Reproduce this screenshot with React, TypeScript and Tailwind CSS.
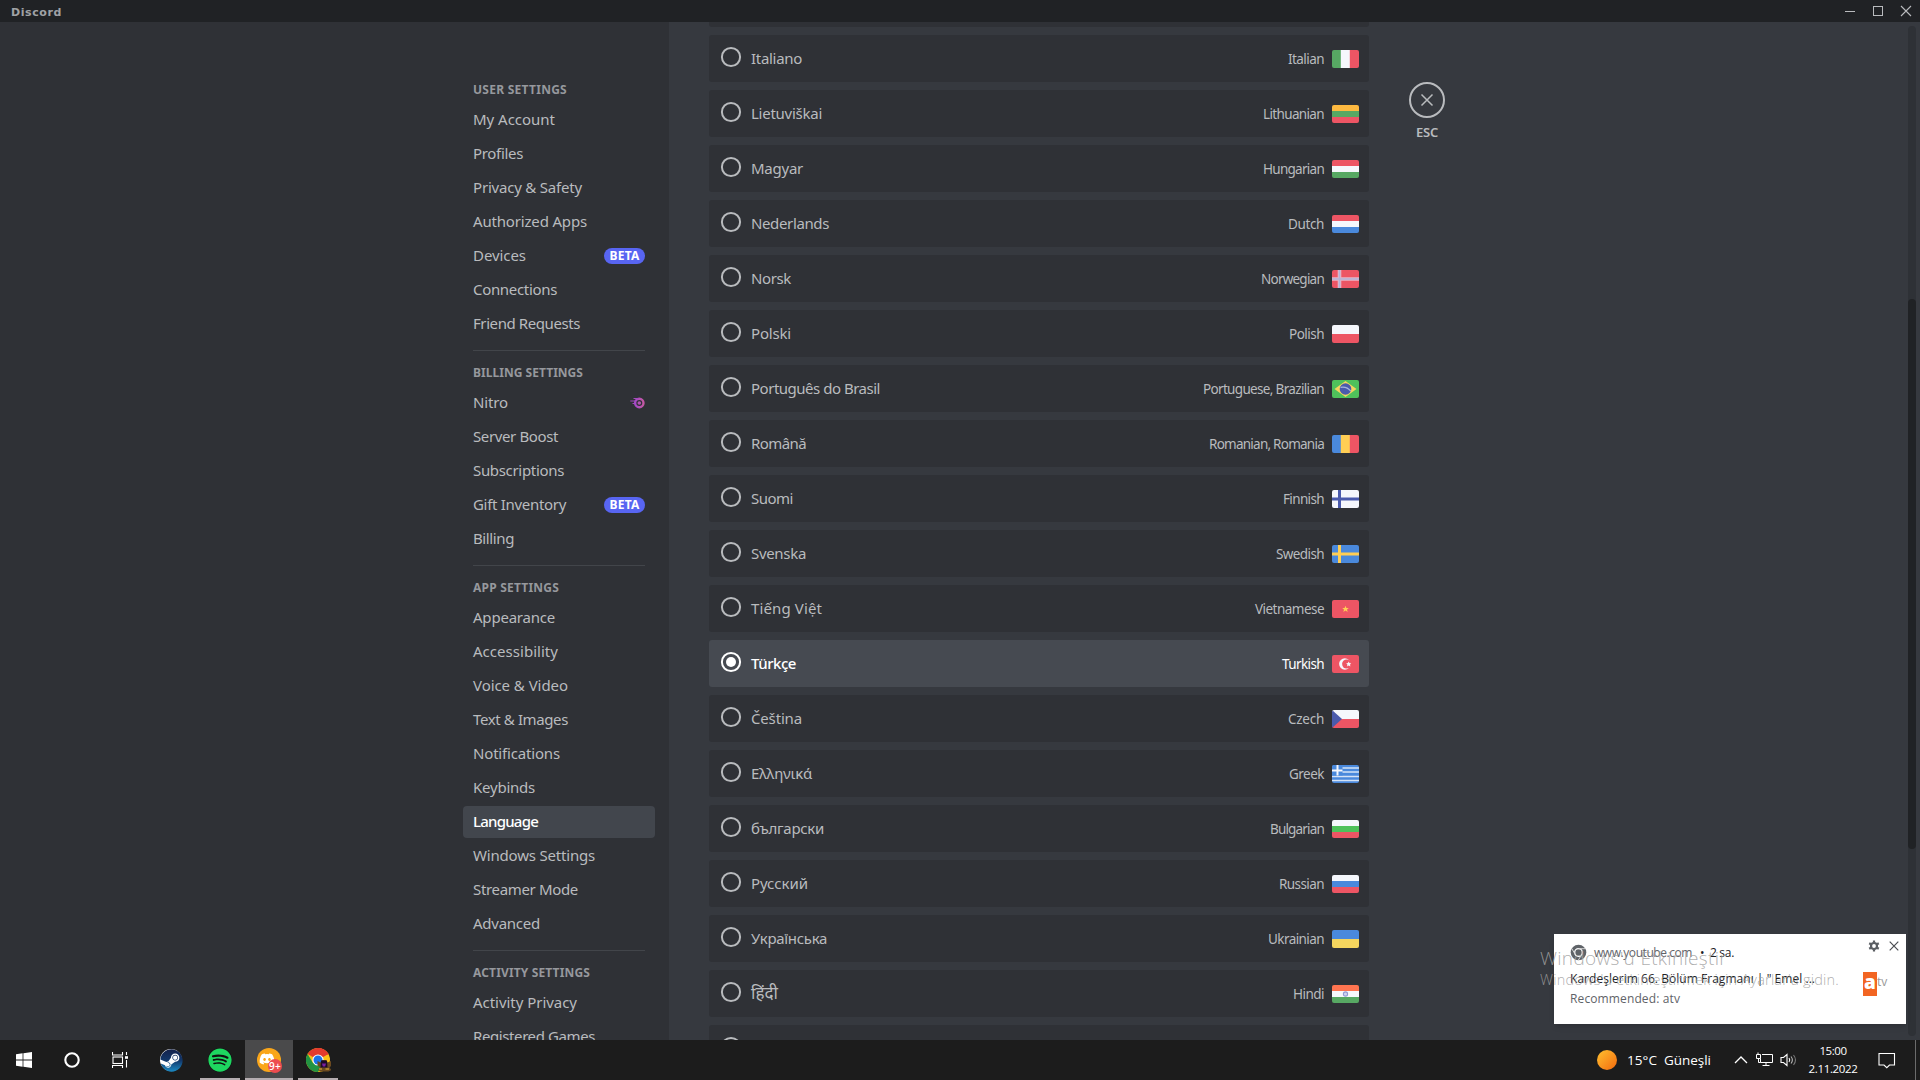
import { useLayoutEffect, useRef, type ReactNode } from 'react';
import { FaDiscord, FaSpotify, FaSteam } from 'react-icons/fa';

/** Text whose tracking is adjusted so that the run spans `w` pixels. */
function Fit({ w, className = '', children }: { w: number; className?: string; children: string }) {
  const ref = useRef<HTMLSpanElement>(null);
  useLayoutEffect(() => {
    const el = ref.current;
    if (!el) return;
    el.style.letterSpacing = '0px';
    const natural = el.getBoundingClientRect().width;
    el.style.letterSpacing = `${(w - natural) / children.length}px`;
  }, [w, children]);
  return (
    <span ref={ref} className={`inline-block whitespace-nowrap ${className}`}>
      {children}
    </span>
  );
}

type Item = { label: string; w: number; badge?: 'beta' | 'nitro'; active?: boolean };
type Section = { title: string; w: number; items: Item[] };

const sections: Section[] = [
  {
    title: 'USER SETTINGS',
    w: 94,
    items: [
      { label: 'My Account', w: 82 },
      { label: 'Profiles', w: 50 },
      { label: 'Privacy & Safety', w: 109 },
      { label: 'Authorized Apps', w: 114 },
      { label: 'Devices', w: 53, badge: 'beta' },
      { label: 'Connections', w: 84 },
      { label: 'Friend Requests', w: 107 },
    ],
  },
  {
    title: 'BILLING SETTINGS',
    w: 110,
    items: [
      { label: 'Nitro', w: 35, badge: 'nitro' },
      { label: 'Server Boost', w: 85 },
      { label: 'Subscriptions', w: 91 },
      { label: 'Gift Inventory', w: 93, badge: 'beta' },
      { label: 'Billing', w: 41 },
    ],
  },
  {
    title: 'APP SETTINGS',
    w: 86,
    items: [
      { label: 'Appearance', w: 82 },
      { label: 'Accessibility', w: 85 },
      { label: 'Voice & Video', w: 95 },
      { label: 'Text & Images', w: 95 },
      { label: 'Notifications', w: 87 },
      { label: 'Keybinds', w: 62 },
      { label: 'Language', w: 65, active: true },
      { label: 'Windows Settings', w: 122 },
      { label: 'Streamer Mode', w: 105 },
      { label: 'Advanced', w: 67 },
    ],
  },
  {
    title: 'ACTIVITY SETTINGS',
    w: 117,
    items: [
      { label: 'Activity Privacy', w: 104 },
      { label: 'Registered Games', w: 122 },
    ],
  },
];

const RED = '#ed5564';
const WHITE = '#f5f7fc';
const BLUE = '#4a89dc';
const NAVY = '#4a5aac';
const YELLOW = '#ffce54';
const GREEN = '#57a863';
const LIME = '#4fc15b';

const bars = (a: string, b: string, c: string) => (
  <>
    <rect width="27" height="6.2" fill={a} />
    <rect y="6" width="27" height="6" fill={b} />
    <rect y="12" width="27" height="6" fill={c} />
  </>
);
const pillars = (a: string, b: string, c: string) => (
  <>
    <rect width="9" height="18" fill={a} />
    <rect x="8.8" width="9.2" height="18" fill={b} />
    <rect x="17.8" width="9.2" height="18" fill={c} />
  </>
);
const halves = (a: string, b: string) => (
  <>
    <rect width="27" height="9" fill={a} />
    <rect y="9" width="27" height="9" fill={b} />
  </>
);
const cross = (bg: string, outer: string, t: number) => (
  <>
    <rect width="27" height="18" fill={bg} />
    <path d="M7.5 0v18M0 9h27" stroke={outer} strokeWidth={t} />
  </>
);

const flags: Record<string, ReactNode> = {
  it: pillars(GREEN, WHITE, RED),
  lt: bars('#fdb940', GREEN, RED),
  hu: bars(RED, WHITE, GREEN),
  nl: bars(RED, WHITE, BLUE),
  no: (
    <>
      {cross(RED, '#e9b5c6', 3.6)}
      <path d="M7.5 0v18M0 9h27" stroke="#b3b3d8" strokeWidth="1.6" />
    </>
  ),
  pl: halves(WHITE, RED),
  br: (
    <>
      <rect width="27" height="18" fill={LIME} />
      <path d="M2.5 9 13.5 1l11 8-11 8z" fill="#f5d55e" />
      <circle cx="13.5" cy="9" r="5.8" fill={NAVY} />
      <path d="M8.500 7.400c4-.8 7.800.6 10.300 3.800" fill="none" stroke="#a9b5dd" strokeWidth="1.200" />
    </>
  ),
  ro: pillars(BLUE, YELLOW, RED),
  fi: cross(WHITE, NAVY, 3),
  se: cross(BLUE, YELLOW, 3),
  vn: (
    <>
      <rect width="27" height="18" fill={RED} />
      <path d="m13.500 5.700.9 2.200 2.400.1-1.800 1.500.6 2.400-2.100-1.300-2.100 1.300.6-2.400-1.800-1.500 2.400-.1z" fill={YELLOW} />
    </>
  ),
  tr: (
    <>
      <rect width="27" height="18" fill={RED} />
      <circle cx="12.800" cy="9" r="5.700" fill={WHITE} />
      <circle cx="14.600" cy="9" r="4.500" fill={RED} />
      <path d="m16.700 6.500.8 1.600 1.800.3-1.300 1.200.3 1.800-1.600-.9-1.600.9.3-1.800-1.300-1.200 1.800-.3z" fill={WHITE} />
    </>
  ),
  cz: (
    <>
      {halves(WHITE, RED)}
      <path d="M0 0l10 9-10 9z" fill={NAVY} />
    </>
  ),
  gr: (
    <>
      <rect width="27" height="18" fill={BLUE} />
      <path d="M0 3h27M0 7h27M0 11.500h27M0 15.500h27" stroke="#d5e3f6" strokeWidth="1.500" />
      <rect width="10.500" height="10.500" fill={BLUE} />
      <path d="M5.500 0v10.500M0 5.500h10.500" stroke={WHITE} strokeWidth="2" />
    </>
  ),
  bg: bars(WHITE, LIME, RED),
  ru: bars(WHITE, BLUE, RED),
  ua: halves(BLUE, '#f5d55e'),
  in: (
    <>
      {bars('#ff7450', WHITE, GREEN)}
      <circle cx="13.500" cy="9" r="2.100" fill="#cfd4f0" stroke="#9099d6" strokeWidth="1.100" />
    </>
  ),
};

type Lang = { name: string; w: number; en: string; ew: number; flag: string; on?: boolean };
const langs: Lang[] = [
  { name: 'Italiano', w: 51, en: 'Italian', ew: 36, flag: 'it' },
  { name: 'Lietuviškai', w: 71, en: 'Lithuanian', ew: 61, flag: 'lt' },
  { name: 'Magyar', w: 52, en: 'Hungarian', ew: 61, flag: 'hu' },
  { name: 'Nederlands', w: 78, en: 'Dutch', ew: 36, flag: 'nl' },
  { name: 'Norsk', w: 40, en: 'Norwegian', ew: 63, flag: 'no' },
  { name: 'Polski', w: 40, en: 'Polish', ew: 35, flag: 'pl' },
  { name: 'Português do Brasil', w: 129, en: 'Portuguese, Brazilian', ew: 121, flag: 'br' },
  { name: 'Română', w: 55, en: 'Romanian, Romania', ew: 115, flag: 'ro' },
  { name: 'Suomi', w: 42, en: 'Finnish', ew: 41, flag: 'fi' },
  { name: 'Svenska', w: 55, en: 'Swedish', ew: 48, flag: 'se' },
  { name: 'Tiếng Việt', w: 71, en: 'Vietnamese', ew: 69, flag: 'vn' },
  { name: 'Türkçe', w: 45, en: 'Turkish', ew: 42, flag: 'tr', on: true },
  { name: 'Čeština', w: 51, en: 'Czech', ew: 36, flag: 'cz' },
  { name: 'Ελληνικά', w: 61, en: 'Greek', ew: 35, flag: 'gr' },
  { name: 'български', w: 73, en: 'Bulgarian', ew: 54, flag: 'bg' },
  { name: 'Русский', w: 57, en: 'Russian', ew: 45, flag: 'ru' },
  { name: 'Українська', w: 76, en: 'Ukrainian', ew: 56, flag: 'ua' },
  { name: 'हिंदी', w: 0, en: 'Hindi', ew: 31, flag: 'in' },
];

function Flag({ id }: { id: string }) {
  return (
    <svg width="27" height="18" viewBox="0 0 27 18" className="ml-2 rounded-[2px]">
      {flags[id]}
    </svg>
  );
}

function Radio({ on }: { on?: boolean }) {
  return (
    <svg width="24" height="24" viewBox="0 0 24 24" className={on ? 'text-white' : 'text-[#b9bbbe]'}>
      <circle cx="12" cy="12" r="9.1" fill="none" stroke="currentColor" strokeWidth="2" />
      {on && <circle cx="12" cy="12" r="5" fill="currentColor" />}
    </svg>
  );
}

function LanguageRow({ lang }: { lang: Lang }) {
  return (
    <div
      className={`flex h-[47px] shrink-0 items-start rounded-[3px] px-2.5 pt-2.5 ${
        lang.on ? 'bg-[#464a51] text-white' : 'bg-[#2f3136] text-[#b9bbbe]'
      }`}
    >
      <Radio on={lang.on} />
      <div className="ml-2 pt-[3px] text-[15px] leading-5">
        {lang.w ? (
          <Fit w={lang.w} className={lang.on ? 'font-medium' : ''}>
            {lang.name}
          </Fit>
        ) : (
          <span className="font-['Noto_Sans','Noto_Sans_Devanagari',sans-serif] text-[17px]">{lang.name}</span>
        )}
      </div>
      <div className="ml-auto flex items-center pt-[5px] text-[13.5px] leading-[18px]">
        <Fit w={lang.ew}>{lang.en}</Fit>
        <Flag id={lang.flag} />
      </div>
    </div>
  );
}

function NitroIcon() {
  return (
    <svg width="15" height="12" viewBox="0 0 15 12" fill="none">
      <defs>
        <linearGradient id="nitro" x1="0" x2="1">
          <stop offset="0" stopColor="#a548c9" />
          <stop offset="1" stopColor="#c459a3" />
        </linearGradient>
      </defs>
      <circle cx="9.300" cy="6" r="4.200" stroke="url(#nitro)" strokeWidth="2.400" />
      <circle cx="9.300" cy="6" r="1.800" fill="#b252b3" />
      <path d="M3.500 1.500h5M.3 4h5.200M2.500 6.500h2.500" stroke="#a64ac0" strokeWidth="1.200" />
    </svg>
  );
}

function Sidebar() {
  return (
    <aside className="flex w-[669px] shrink-0 justify-end bg-[#2f3136] pt-[54px] pr-3.5">
      <nav className="w-48">
        {sections.map((s, i) => (
          <div key={s.title} className="flex flex-col">
            {i > 0 && <div className="mx-2.5 my-2 h-px bg-[#42454a]" />}
            <div className="h-7 px-2.5 pt-1.5 text-xs leading-4 font-bold text-[#96989d]">
              <Fit w={s.w}>{s.title}</Fit>
            </div>
            {s.items.map((it) => (
              <div
                key={it.label}
                className={`mb-0.5 flex h-8 items-center rounded px-2.5 text-[15px] leading-5 ${
                  it.active ? 'bg-[#42464d] font-medium text-white' : 'text-[#b9bbbe]'
                }`}
              >
                <Fit w={it.w} className="-mt-[3px]">
                  {it.label}
                </Fit>
                {it.badge === 'beta' && (
                  <span className="ml-auto flex h-4 w-[41px] items-center justify-center rounded-full bg-[#5865f2] text-xs font-bold text-white">
                    <Fit w={30}>BETA</Fit>
                  </span>
                )}
                {it.badge === 'nitro' && (
                  <span className="ml-auto">
                    <NitroIcon />
                  </span>
                )}
              </div>
            ))}
          </div>
        ))}
      </nav>
    </aside>
  );
}

function TitleBar() {
  return (
    <header className="flex h-[22px] shrink-0 items-center bg-[#202225] pl-[11px] text-[#a0a2a6]">
      <Fit w={51} className="mt-1 font-['DejaVu_Sans',sans-serif] text-[11px] leading-3 font-bold">
        Discord
      </Fit>
      <svg width="84" height="22" viewBox="0 0 84 22" className="ml-auto text-[#b9bbbe]" fill="none" stroke="currentColor">
        <path d="M9 11.500h10" />
        <rect x="37.500" y="6.500" width="9" height="9" />
        <path d="M65 6l10 10M75 6 65 16" strokeWidth="1.100" />
      </svg>
    </header>
  );
}

function CloseButton() {
  return (
    <div className="ml-10 flex w-9 flex-col items-center pt-[60px]">
      <div className="flex size-9 items-center justify-center rounded-full border-2 border-[#b9bbbe]">
        <svg width="14" height="14" viewBox="0 0 14 14" stroke="#b9bbbe" strokeWidth="1.500">
          <path d="M1.500 1.500l11 11M12.500 1.500l-11 11" />
        </svg>
      </div>
      <span className="mt-[6px] text-[13px] leading-4 font-semibold text-[#b9bbbe]">
        <Fit w={22}>ESC</Fit>
      </span>
    </div>
  );
}

function Toast() {
  return (
    <div className="absolute top-[934px] left-[1554px] h-[90px] w-[352px] bg-white font-['Open_Sans',sans-serif] shadow-md">
      <div className="flex h-7 items-start pt-[10px] pl-4">
        <svg width="17" height="17" viewBox="0 0 17 17" fill="none">
          <circle cx="8.500" cy="8.500" r="7.800" fill="#5f6368" />
          <circle cx="8.500" cy="8.500" r="3.800" stroke="#fff" strokeWidth="1.300" />
          <path d="M8.500 4.700h7M5.200 10.400 1.800 4.600M11.800 10.400 8.300 16.200" stroke="#d5d5d5" strokeWidth="1" />
        </svg>
        <div className="ml-[7px] flex text-[12px] leading-[17px] text-[#5f6368]">
          <Fit w={98}>www.youtube.com</Fit>
          <span className="ml-2 w-[10px] text-[#202124]">•</span>
          <span className="text-[#202124]">
            <Fit w={24}>2 sa.</Fit>
          </span>
        </div>
        <div className="ml-auto flex items-center gap-[9px] pr-[6px]">
          <svg width="12" height="12" viewBox="0 0 12 12" className="-mt-1">
            <circle cx="6" cy="6" r="3" fill="none" stroke="#5a5e63" strokeWidth="2.200" />
            <path d="M6 .5v2M6 9.500v2M1.200 3.200l1.800 1M9 7.800l1.800 1M1.200 8.800l1.800-1M9 4.200l1.800-1" stroke="#5a5e63" strokeWidth="2.200" />
          </svg>
          <svg width="10" height="10" viewBox="0 0 10 10" className="-mt-1 mr-px" stroke="#4a4d51" strokeWidth="1.200">
            <path d="M.7.7l8.600 8.600M9.300.7.7 9.300" />
          </svg>
        </div>
      </div>
      <div className="flex pl-4">
        <div className="pt-[7px] text-[12px] leading-5 text-[#202124]">
          <div>
            <Fit w={245}>{'Kardeşlerim 66. Bölüm Fragmanı | " Emel ...'}</Fit>
          </div>
          <div className="text-[#5f6368]">
            <Fit w={110}>Recommended: atv</Fit>
          </div>
        </div>
        <div className="mt-[10px] ml-auto flex h-6 w-[43px] items-center">
          <span className="flex h-6 w-[14px] items-center justify-center bg-[#f26522] pb-1 text-[19px] leading-none font-extrabold text-white">
            a
          </span>
          <span className="pb-1 text-[12px] text-[#9a9a9a]">tv</span>
        </div>
      </div>
    </div>
  );
}

function Watermark() {
  return (
    <div className="absolute top-[944px] left-[1540px] font-['Open_Sans',sans-serif] font-light text-[#a0a0a0]/85">
      <div className="text-[19px] leading-7">
        <Fit w={187}>Windows'u Etkinleştir</Fit>
      </div>
      <div className="-mt-0.5 text-[14.5px] leading-5">
        <Fit w={299}>Windows'u etkinleştirmek için Ayarlar'a gidin.</Fit>
      </div>
    </div>
  );
}

function SteamIcon() {
  return (
    <div className="relative size-[22px] rounded-full bg-white">
      <svg width="0" height="0" className="absolute">
        <linearGradient id="steam" x1="0" y1="0" x2="0" y2="1">
          <stop offset="0" stopColor="#14214a" />
          <stop offset=".5" stopColor="#12386b" />
          <stop offset="1" stopColor="#1b8ac4" />
        </linearGradient>
      </svg>
      <FaSteam size={23} className="absolute -top-[.5px] -left-[.5px]" style={{ fill: 'url(#steam)' }} />
    </div>
  );
}

function ChromeIcon() {
  return (
    <svg width="25" height="25" viewBox="0 0 25 25">
      <circle cx="12" cy="12" r="12" fill="#fbc116" />
      <path d="M12 12 1.600 6A12 12 0 0 1 22.400 6z" fill="#e33b2e" />
      <path d="M12 0a12 12 0 0 1 10.400 6.500H12z" fill="#e33b2e" />
      <path d="M1.600 6A12 12 0 0 0 12 24l5.200-9L12 12 7 15z" fill="#229342" />
      <circle cx="12" cy="12" r="5.600" fill="#fff" />
      <circle cx="12" cy="12" r="4.500" fill="#1a73e8" />
      <path d="M11.500 13l3 1.500 1.500-2.500h4l1.500 2.500 3.500-1.500v5l-1.500 1.500 2 2.500-3 1.500h-8l-2.500-1.500 2-2.500-2.500-2z" fill="#6b4a20" />
      <path d="M15 12.500h6l.5 7h-7z" fill="#1d0b26" />
      <path d="M16 15.500h4l-.8 3h-2.400z" fill="#7b1fa2" />
      <path d="M13 21h3M19.500 21h3.500" stroke="#c4922c" strokeWidth="1.300" />
    </svg>
  );
}

function TaskButton({ open, active, className = 'w-12', children }: { open?: boolean; active?: boolean; className?: string; children: ReactNode }) {
  return (
    <div className={`relative flex h-10 shrink-0 items-center justify-center ${active ? 'bg-[#4a4a4b]' : ''} ${className}`}>
      {children}
      {(open || active) && (
        <div className={`absolute bottom-0 h-0.5 bg-[#b5adb0] ${active ? 'inset-x-0' : 'inset-x-1'}`} />
      )}
    </div>
  );
}

function Taskbar() {
  return (
    <footer className="flex h-10 shrink-0 bg-[#1c1c1c] font-['Open_Sans',sans-serif] text-white">
      <TaskButton>
        <svg width="16" height="16" viewBox="0 0 16 16" fill="#fff">
          <path d="M0 2.200 6.600 1.300V7.600H0zM7.400 1.200 16 0v7.600H7.400zM0 8.400h6.600v6.300L0 13.800zM7.400 8.400H16V16l-8.600-1.200z" />
        </svg>
      </TaskButton>
      <TaskButton>
        <svg width="16" height="16" viewBox="0 0 16 16" fill="none">
          <circle cx="8" cy="8" r="6.700" stroke="#fff" strokeWidth="2.100" />
        </svg>
      </TaskButton>
      <TaskButton>
        <svg width="16" height="16" viewBox="0 0 16 16" fill="none" stroke="#fff" strokeWidth="1.100">
          <path d="M.5 0v3h10V0M.5 16v-2.500h10V16M14.500 0v3M14.500 8v7.500" />
          <rect x="1" y="5" width="9.500" height="6.500" />
          <path d="M13 5.500h3" strokeWidth="2.600" />
        </svg>
      </TaskButton>
      <TaskButton className="w-[54px]">
        <SteamIcon />
      </TaskButton>
      <TaskButton open className="-ml-0.5 w-12">
        <div className="flex size-6 items-center justify-center rounded-full bg-[#111]">
          <FaSpotify size={24} className="shrink-0 text-[#1ed760]" />
        </div>
      </TaskButton>
      <TaskButton active className="ml-px w-12">
        <div className="relative flex size-6 items-center justify-center rounded-full bg-[#faa61a]">
          <FaDiscord size={16} className="-mt-0.5 -ml-1" />
          <span className="absolute top-[11px] left-[11px] flex size-[14px] items-center justify-center rounded-full bg-[#ed4c50]">
            <Fit w={12} className="text-[10px] leading-none font-semibold">
              9+
            </Fit>
          </span>
        </div>
      </TaskButton>
      <TaskButton open className="ml-px w-12">
        <ChromeIcon />
      </TaskButton>

      <div className="ml-auto flex items-center">
        <div className="size-5 rounded-full bg-linear-to-br from-[#fdc02f] to-[#f2680c]" />
        <div className="ml-2.5 flex w-[84px] justify-between text-[13.5px] leading-5">
          <Fit w={30}>15°C</Fit>
          <Fit w={47}>Güneşli</Fit>
        </div>
        <svg width="14" height="8" viewBox="0 0 14 8" className="ml-[23px]" fill="none" stroke="#fff" strokeWidth="1.300">
          <path d="M1 7l6-6 6 6" />
        </svg>
        <svg width="17" height="16" viewBox="0 0 17 16" className="ml-[8px]" fill="none" stroke="#fff" strokeWidth="1">
          <path d="M6 2.500h10.500v8H4.500v-4M10 10.500v3M6.500 13.500h7" />
          <path d="M.5 2.500h4v4h-4zM2.500 6.500v4M2 .5v2M2.500 10.500h2" />
        </svg>
        <svg width="18" height="16" viewBox="0 0 18 16" className="ml-[7px]" fill="none" stroke="#fff" strokeWidth="1.100">
          <path d="M1 5.500h2.500L7 2.500v11l-3.500-3H1z" />
          <path d="M9 6q1.500 2 0 4" />
          <path d="M11 4.500q2.800 3.500 0 7" stroke="#b5b5b5" />
          <path d="M13.500 3q4 5 0 10" stroke="#777" />
        </svg>
        <div className="ml-[10px] flex w-[50px] flex-col items-center text-[11.5px] leading-[18px]">
          <Fit w={27}>15:00</Fit>
          <Fit w={49}>2.11.2022</Fit>
        </div>
        <svg width="18" height="17" viewBox="0 0 18 17" className="ml-5" fill="none" stroke="#fff" strokeWidth="1.100">
          <path d="M1 1.500h15.500v11.500h-5l-2.700 2.700L6 13H1z" />
        </svg>
        <div className="ml-[19px] h-10 w-px bg-[#6b6b6b]" />
        <div className="w-[4px]" />
      </div>
    </footer>
  );
}

export default function App() {
  return (
    <div className="relative flex h-[1080px] w-[1920px] flex-col overflow-hidden bg-[#36393f] font-['Noto_Sans',sans-serif]">
      <TitleBar />
      <div className="flex h-[1018px] shrink-0 overflow-hidden">
        <Sidebar />
        <main className="flex grow overflow-hidden pl-10">
          <div className="flex w-[660px] shrink-0 flex-col gap-2">
            <div className="h-[5px] shrink-0 rounded-b-[3px] bg-[#2f3136]" />
            {langs.map((l) => (
              <LanguageRow key={l.flag} lang={l} />
            ))}
            <div className="h-[47px] shrink-0 rounded-[3px] bg-[#2f3136] px-2.5 pt-2.5">
              <Radio />
            </div>
          </div>
          <CloseButton />
          <div className="mt-1 mr-1 ml-auto h-[1010px] w-2 rounded-full bg-[#2e3136] pt-[273px]">
            <div className="h-[550px] rounded-full bg-[#202225]" />
          </div>
        </main>
      </div>
      <Taskbar />
      <Toast />
      <Watermark />
    </div>
  );
}
